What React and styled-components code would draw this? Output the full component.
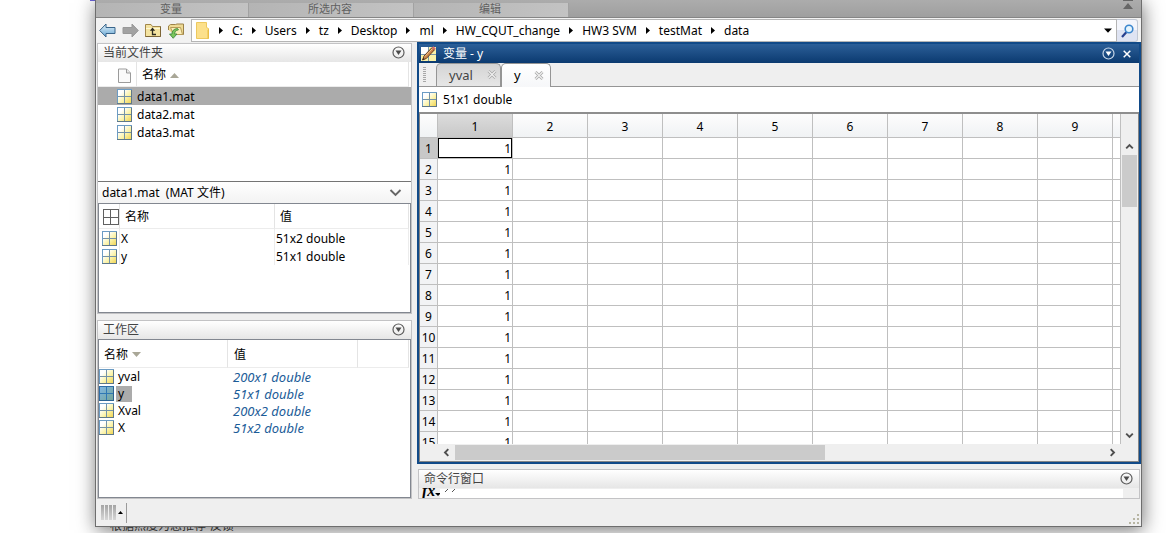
import React from "react";
import styled, { createGlobalStyle, css } from "styled-components";

const Global = createGlobalStyle`
  *, *::before, *::after { box-sizing: border-box; }
  body {
    margin: 0;
    overflow: hidden;
    background: #fff;
    color: #000;
    font: 12px/18px "Noto Sans", "Noto Sans CJK SC", sans-serif;
  }
  button, input { font: inherit; color: inherit; }
  button { display: inline-flex; align-items: center; justify-content: center; padding: 0; border: 0; background: none; }
  a { color: inherit; text-decoration: none; }
  table { border-collapse: separate; border-spacing: 0; table-layout: fixed; width: 100%; }
  th { font-weight: 400; text-align: left; }
  th, td { padding: 0; white-space: nowrap; overflow: hidden; }
  svg { display: block; flex: none; }
`;

const Desktop = styled.div`
  display: flex;
  flex-direction: column;
  height: 100vh;
  padding: 0 24px 0 95px;
  background: linear-gradient(#6a62d8, #6a62d8) 90px 0 / 5px 1px no-repeat #fff;
`;

const Window = styled.main`
  position: relative;
  z-index: 1;
  flex: 1;
  min-height: 0;
  display: flex;
  flex-direction: column;
  border: 1px solid #6e6e6e;
  border-top: 0;
  background: #efefef;
  box-shadow: 1px 3px 18px rgba(0, 0, 0, 0.55);
`;

const PageBehind = styled.div`
  flex: none;
  display: flex;
  align-items: flex-end;
  gap: 4px;
  height: 6px;
  padding-left: 15px;
  overflow: hidden;
  color: #444;
  line-height: 14px;
  white-space: nowrap;
`;

const Toolstrip = styled.div`
  flex: none;
  display: flex;
  height: 18px;
  padding-top: 3px;
  border-bottom: 1px solid #858585;
  background: linear-gradient(#acacac, #9f9f9f);
`;

const ToolGroup = styled.div`
  width: ${(p) => p.$width}px;
  padding-right: 2px;
  border-right: 1px solid #a2a2a2;
  background: linear-gradient(100deg, #b4b4b4, #c3c3c3);
  color: #606060;
  font-size: 11px;
  line-height: 12px;
  text-align: center;
`;

const CollapseButton = styled.button`
  align-self: flex-start;
  margin: -3px 7px 0 auto;
`;

const AddressRow = styled.nav`
  flex: none;
  display: flex;
  height: 24px;
  padding: 1px 3px 0 3px;
  background: #f2f2f2;
`;

const NavButtons = styled.div`
  display: flex;
  align-items: center;
  gap: 6px;
  width: 92px;
`;

const AddressBox = styled.div`
  flex: 1;
  min-width: 0;
  display: flex;
  align-items: center;
  gap: 9px;
  padding: 0 4px;
  border: 1px solid #b5b5b5;
  background: #fff;
  white-space: nowrap;
`;

const DropButton = styled.button`
  margin-left: auto;
`;

const SearchButton = styled.button`
  width: 21px;
  border: 1px solid #c2c8d4;
  border-left: 0;
  border-radius: 0 3px 3px 0;
  background: linear-gradient(#f3f5fb 50%, #dfe4f3 50%);
`;

const Workbench = styled.div`
  flex: 1;
  min-height: 0;
  display: grid;
  grid-template-columns: 315px minmax(0, 1fr);
  grid-template-rows: minmax(0, 1fr);
  column-gap: 5px;
  padding-left: 1px;
`;

const Sidebar = styled.aside`
  display: grid;
  grid-template-rows: minmax(0, 271fr) minmax(0, 179fr);
  row-gap: 6px;
  padding-top: 1px;
`;

const MainColumn = styled.div`
  display: flex;
  flex-direction: column;
  min-height: 0;
  gap: 5px;
`;

const Panel = styled.section`
  display: flex;
  flex-direction: column;
  min-height: 0;
  border: 1px solid #c3c3c5;
  background: #efefef;
`;

const PanelTitle = styled.header`
  flex: none;
  display: flex;
  align-items: center;
  justify-content: space-between;
  height: 18px;
  padding: 0 6px 1px 5px;
  background: linear-gradient(#fff, #e6e6e6);
  color: #444;

  h2 { margin: 0; font-size: 12px; font-weight: 400; line-height: 16px; }
`;

const FileList = styled.div`
  flex: 1;
  min-height: 0;
  overflow: hidden;
  background: #fff;
`;

const ListFrame = styled.div`
  flex: ${(p) => (p.$height ? "none" : "1")};
  height: ${(p) => (p.$height ? p.$height + "px" : "auto")};
  min-height: 0;
  overflow: hidden;
  border: 1px solid #828790;
  background: #fff;
`;

const HeadCell = styled.th`
  height: ${(p) => p.$height || 25}px;
  padding-top: 2px;
  padding-left: ${(p) => p.$indent || 0}px;
  border-right: 1px solid #e4e4e4;
  border-bottom: 1px solid #ececec;
`;

const HeadLabel = styled.span`
  display: flex;
  align-items: center;
  gap: 4px;
`;

const ListRow = styled.tr`
  height: ${(p) => p.$height || 18}px;
  line-height: ${(p) => (p.$height || 18) - 1}px;
  background: ${(p) => (p.$selected ? "#ababab" : "transparent")};
`;

const Cell = styled.td`
  padding-left: ${(p) => p.$indent || 0}px;
  ${(p) => p.$ruled && css`border-right: 1px solid #ececec;`}
  ${(p) => p.$value && css`color: #1c5c98; font-style: italic; font-size: 13px;`}
`;

const NameTag = styled.span`
  display: inline-block;
  margin-left: 2px;
  padding: 0 8px 0 2px;
  background: ${(p) => (p.$selected ? "#ababab" : "transparent")};
`;

const NameLine = styled.span`
  display: flex;
  align-items: center;
`;

const DetailTitle = styled.header`
  flex: none;
  display: flex;
  align-items: center;
  justify-content: space-between;
  height: 22px;
  padding: 0 9px 0 4px;
  border-top: 1px solid #747474;
  background: linear-gradient(#fff, #f3f3f3);
  white-space: pre;

  h3 { margin: 0; font-size: 12px; font-weight: 400; }
`;

const Editor = styled.section`
  flex: 1;
  min-height: 0;
  display: flex;
  flex-direction: column;
  border: 2px solid #114a88;
  background: #efefef;
`;

const EditorTitle = styled.header`
  flex: none;
  display: flex;
  align-items: center;
  gap: 6px;
  height: 19px;
  padding: 0 8px 0 2px;
  background: linear-gradient(#2c5f98, #0b3a70);
  color: #fff;

  h2 { margin: 0; font-size: 12px; font-weight: 400; }
`;

const TitleButtons = styled.div`
  display: flex;
  align-items: center;
  gap: 8px;
  margin-left: auto;
`;

const TabBar = styled.div`
  flex: none;
  display: flex;
  align-items: flex-end;
  height: 24px;
  border-bottom: 1px solid #959595;
`;

const Grip = styled.span`
  align-self: center;
  width: 3px;
  height: 15px;
  margin: 0 10px 0 4px;
  background: repeating-linear-gradient(#a8a8a8 0 1px, transparent 1px 2px);
`;

const Tab = styled.div`
  display: flex;
  align-items: center;
  justify-content: space-between;
  width: ${(p) => p.$width}px;
  height: ${(p) => (p.$active ? 24 : 23)}px;
  margin-bottom: ${(p) => (p.$active ? -1 : 0)}px;
  padding: 0 ${(p) => (p.$active ? 6 : 3)}px 1px 12px;
  border: 1px solid #959595;
  border-bottom: 0;
  border-radius: 5px 5px 0 0;
  background: ${(p) => (p.$active ? "linear-gradient(#fff, #f6f7f9)" : "linear-gradient(#d4d4d4, #e6e6e6)")};
  color: ${(p) => (p.$active ? "#000" : "#444")};
  font-size: 13px;
`;

const InfoBar = styled.div`
  flex: none;
  display: flex;
  align-items: center;
  gap: 6px;
  height: 25px;
  padding-left: 3px;
  background: #fff;
`;

const GridFrame = styled.div`
  flex: 1;
  min-height: 0;
  display: grid;
  grid-template-columns: minmax(0, 1fr) 17px;
  grid-template-rows: minmax(0, 1fr) 17px;
  border: 1px solid #858585;
  border-top: 2px solid #8e8e8e;
`;

const GridView = styled.div`
  overflow: hidden;
  background: #fff;
`;

const ColHead = styled.th`
  height: 24px;
  padding-top: 2px;
  border-right: 1px solid #bfbfbf;
  border-bottom: 1px solid #bfbfbf;
  background: ${(p) => (p.$selected ? "linear-gradient(#dcdcdc, #c8c8c8)" : "linear-gradient(#fdfdfd, #f0f2f4)")};
  text-align: center;
`;

const RowHead = styled(ColHead)`
  height: 21px;
  background: ${(p) => (p.$selected ? "#c8c8c8" : "#f2f3f5")};
`;

const DataCell = styled.td`
  height: 21px;
  padding: 2px 1px 0 0;
  border-right: 1px solid #bfbfbf;
  border-bottom: 1px solid #bfbfbf;
  text-align: right;
  ${(p) => p.$selected && css`box-shadow: inset 0 0 0 1px #000;`}
`;

const VerticalScroll = styled.div`
  display: flex;
  flex-direction: column;
  padding: 24px 1px 0 1px;
`;

const HorizontalScroll = styled.div`
  display: flex;
  padding: 1px 0 1px 18px;
`;

const ScrollButton = styled.button`
  flex: none;
  width: ${(p) => (p.$wide ? 17 : 15)}px;
  height: ${(p) => (p.$wide ? 15 : 17)}px;
`;

const Track = styled.div`
  flex: 1;
  min-height: 0;
`;

const Thumb = styled.div`
  width: ${(p) => p.$width || "100%"};
  height: ${(p) => p.$height || "100%"};
  background: #cbcbcb;
`;

const CommandPanel = styled(Panel)`
  flex: none;
  margin: 0 1px;
`;

const CommandLine = styled.div`
  display: flex;
  align-items: flex-end;
  height: 10px;
  padding-right: 16px;
  overflow: hidden;
`;

const FxMark = styled.span`
  display: flex;
  align-items: flex-end;
  width: 21px;
  padding-left: 3px;
  font: italic bold 16px/14px "Liberation Serif", serif;
`;

const Prompt = styled.span`
  flex: 1;
  height: 9px;
  padding-left: 4px;
  background: #fff;
`;

const StatusBar = styled.footer`
  flex: none;
  display: flex;
  align-items: center;
  height: 27px;
  padding-left: 5px;
`;

const StatusBusy = styled.button`
  gap: 2px;
  height: 20px;
  padding-right: 3px;
  border-right: 1px solid #9a9a9a;
`;

const ResizeGrip = styled.span`
  align-self: flex-end;
  margin: 0 2px 2px auto;
`;

const MatIcon = ({ selected }) => (
  <svg width="15" height="15" viewBox="0 0 15 15" aria-hidden="true" shapeRendering="crispEdges">
    <defs>
      <linearGradient id="matFill" x1="0" y1="0" x2="1" y2="1">
        <stop offset="0.25" stopColor="#fff" />
        <stop offset="0.6" stopColor="#fbf3a8" />
        <stop offset="1" stopColor="#f0d24e" />
      </linearGradient>
      <linearGradient id="matSelected" x1="0" y1="0" x2="1" y2="1">
        <stop offset="0" stopColor="#7fb6e6" />
        <stop offset="1" stopColor="#74a595" />
      </linearGradient>
    </defs>
    <rect x="0.5" y="0.5" width="14" height="14" fill={selected ? "url(#matSelected)" : "url(#matFill)"} stroke={selected ? "#2f6ea8" : "#6c9cc4"} />
    <path d="M7.5 1v13M1 7.5h13" stroke={selected ? "#2f78b4" : "#7492a8"} />
    <path d="M0 14.5h15M14.5 1v13" stroke={selected ? "#2b6392" : "#5f7888"} />
  </svg>
);

const PlainGridIcon = () => (
  <svg width="16" height="16" viewBox="0 0 16 16" aria-hidden="true" shapeRendering="crispEdges">
    <path d="M.5.5h15v15H.5zM7.5 0v16M0 8.5h16" fill="#fff" stroke="#606060" />
  </svg>
);

const PencilGridIcon = () => (
  <svg width="16" height="16" viewBox="0 0 16 16" aria-hidden="true">
    <rect x="0" y="1" width="15" height="14" fill="#fbf3a8" />
    <path d="M0 1h8v7H0z" fill="#fff" />
    <path d="M7.500 1v14M0 8.500h15" stroke="#7c97a8" />
    <path d="M1.500 14l1.500-4L11 1.500l2.600 2.200L5.300 12.500z" fill="#c9844a" stroke="#5a3216" strokeWidth=".9" />
    <path d="M3.800 10.500L11.500 2.500" stroke="#f4c48c" />
    <path d="M10.800 1.700l1.500-1.500 2.500 2.300-1.300 1.400z" fill="#d56a72" />
    <path d="M1.500 14l.7-2 1.300 1.200z" fill="#222" />
  </svg>
);

const MenuCircle = ({ light }) => (
  <svg width="13" height="13" viewBox="0 0 13 13" aria-hidden="true">
    <circle cx="6.500" cy="6.500" r="5.500" fill="none" stroke={light ? "#c6d6e8" : "#5d5d5d"} strokeWidth="1.200" />
    <path d="M3.500 4.500h6L6.500 9z" fill={light ? "#fff" : "#4b4b4b"} />
  </svg>
);

const CrumbArrow = () => (
  <svg width="4" height="7" viewBox="0 0 4 7" aria-hidden="true"><path d="M0 0l4 3.500L0 7z" /></svg>
);

const BlackDown = () => (
  <svg width="8" height="5" viewBox="0 0 8 5" aria-hidden="true"><path d="M0 .5h8L4 4.800z" /></svg>
);

const SortArrow = ({ down }) => (
  <svg width="9" height="5" viewBox="0 0 9 5" aria-hidden="true">
    <path d={down ? "M0 0h9L4.500 5z" : "M0 5h9L4.500 0z"} fill="#a9a797" />
  </svg>
);

const turns = { up: 0, right: 90, down: 180, left: 270 };
const Chevron = ({ to, wide }) => (
  <svg width={wide ? 13 : 9} height="9" viewBox={wide ? "-2 0 13 9" : "0 0 9 9"} aria-hidden="true">
    <path
      d={wide ? "M-.5 7l5-5 5 5" : "M1.200 6.300l3.300-3.300 3.300 3.300"}
      fill="none"
      stroke={wide ? "#666" : "#4f4f4f"}
      strokeWidth="1.900"
      transform={`rotate(${turns[to]} 4.5 4.5)`}
    />
  </svg>
);

const NavArrow = ({ forward }) => (
  <svg width="17" height="15" viewBox="0 0 17 15" aria-hidden="true">
    <defs>
      <linearGradient id="backFill" x1="0" y1="0" x2="0" y2="1">
        <stop offset="0" stopColor="#e4f3fb" />
        <stop offset="1" stopColor="#66a5d2" />
      </linearGradient>
    </defs>
    <path
      d={forward ? "M16.300 7.500L10 1v3.500H1v6h9V14z" : "M.7 7.500L7 1v3.500h9v6H7V14z"}
      fill={forward ? "#a2a2a2" : "url(#backFill)"}
      stroke={forward ? "#989898" : "#39658b"}
    />
  </svg>
);

const FolderUpIcon = () => (
  <svg width="16" height="15" viewBox="0 0 16 15" aria-hidden="true">
    <path d="M.5 13.500V1.500H6l1.500 2h8v10z" fill="#f4e3a0" stroke="#a2874a" />
    <path d="M1 5.500h14" stroke="#fff8d4" />
    <path d="M.5 13.500h15v-10" fill="none" stroke="#7c6537" />
    <path d="M7.500 6v5.500H11" fill="none" stroke="#2c2a20" strokeWidth="1.300" />
    <path d="M7.500 4.500l2.700 3.300H4.800z" fill="#2c2a20" />
  </svg>
);

const FolderBrowseIcon = () => (
  <svg width="17" height="16" viewBox="0 0 17 16" aria-hidden="true">
    <path d="M1.500 7V3l2-1.500h5L10 1h6.500v10.500H7" fill="#eeda94" stroke="#9c8248" />
    <path d="M3.500 4.500h10l2 7h-9z" fill="#fbf0bb" stroke="#b89c59" />
    <path d="M10.500 5.500c-4 .5-5.500 2.500-5.500 5.500H2.500l3.700 4.300L10 11H7.700c0-2 .8-3.500 3.800-4.200z" fill="#7bc65c" stroke="#36803a" strokeWidth=".8" />
  </svg>
);

const FolderIcon = () => (
  <svg width="14" height="17" viewBox="0 0 14 17" aria-hidden="true">
    <path d="M.5.5h10v5l2 1v10H.5z" fill="#fce08b" stroke="#edc95f" />
    <path d="M11.500 8v8.500h1.500V7z" fill="#e9bd45" />
  </svg>
);

const PageIcon = () => (
  <svg width="13" height="15" viewBox="0 0 13 15" aria-hidden="true">
    <path d="M.5 1h8l4 4v9.500H.5z" fill="#fafafa" stroke="#9b9b9b" />
    <path d="M8.500 1v4h4" fill="#e8e8e8" stroke="#9b9b9b" />
  </svg>
);

const MagnifierIcon = () => (
  <svg width="13" height="14" viewBox="0 0 13 14" aria-hidden="true">
    <path d="M1 13l4.500-5" stroke="#27408f" strokeWidth="2.200" />
    <circle cx="8" cy="5" r="3.800" fill="#e6f5fd" stroke="#3b86cd" strokeWidth="1.600" />
  </svg>
);

const TabCross = () => (
  <svg width="10" height="9" viewBox="0 0 10 9" aria-hidden="true">
    <path d="M1.500 1l7 7M8.500 1l-7 7" stroke="#a8a8a8" strokeWidth="2.800" />
    <path d="M1.500 1l7 7M8.500 1l-7 7" stroke="#f2f2f2" strokeWidth="1.100" />
  </svg>
);

const CloseCross = () => (
  <svg width="8" height="8" viewBox="0 0 8 8" aria-hidden="true">
    <path d="M.7 .7l6.600 6.600M7.300 .7L.7 7.300" stroke="#fff" strokeWidth="1.500" />
  </svg>
);

const path = ["C:", "Users", "tz", "Desktop", "ml", "HW_CQUT_change", "HW3 SVM", "testMat", "data"];
const files = ["data1.mat", "data2.mat", "data3.mat"];
const fileVars = [["X", "51x2 double"], ["y", "51x1 double"]];
const workspace = [["yval", "200x1 double"], ["y", "51x1 double"], ["Xval", "200x2 double"], ["X", "51x2 double"]];
const columns = [1, 2, 3, 4, 5, 6, 7, 8, 9];
const rows = Array.from({ length: 15 }, (_, i) => i + 1);

function CurrentFolder() {
  return (
    <Panel>
      <PanelTitle>
        <h2>当前文件夹</h2>
        <button aria-label="当前文件夹菜单"><MenuCircle /></button>
      </PanelTitle>
      <FileList>
        <table>
          <colgroup><col width="39" /><col /><col width="2" /></colgroup>
          <thead>
            <tr>
              <HeadCell $indent={20}><PageIcon /></HeadCell>
              <HeadCell $indent={5}><HeadLabel>名称<SortArrow /></HeadLabel></HeadCell>
              <th />
            </tr>
          </thead>
          <tbody>
            {files.map((name, i) => (
              <ListRow key={name} $selected={i === 0}>
                <Cell $indent={19}><MatIcon /></Cell>
                <Cell colSpan={2}>{name}</Cell>
              </ListRow>
            ))}
          </tbody>
        </table>
      </FileList>
      <DetailTitle>
        <h3>{"data1.mat  (MAT 文件)"}</h3>
        <button aria-label="折叠详细信息"><Chevron to="down" wide /></button>
      </DetailTitle>
      <ListFrame $height={110}>
        <table>
          <colgroup><col width="21" /><col width="155" /><col /><col width="1" /></colgroup>
          <thead>
            <tr>
              <HeadCell $indent={4}><PlainGridIcon /></HeadCell>
              <HeadCell $indent={5}>名称</HeadCell>
              <HeadCell $indent={5}>值</HeadCell>
              <th />
            </tr>
          </thead>
          <tbody>
            {fileVars.map(([name, value]) => (
              <ListRow key={name}>
                <Cell $indent={3} $ruled><MatIcon /></Cell>
                <Cell $indent={1} $ruled>{name}</Cell>
                <Cell $indent={1} $ruled>{value}</Cell>
                <td />
              </ListRow>
            ))}
          </tbody>
        </table>
      </ListFrame>
    </Panel>
  );
}

function Workspace() {
  return (
    <Panel>
      <PanelTitle>
        <h2>工作区</h2>
        <button aria-label="工作区菜单"><MenuCircle /></button>
      </PanelTitle>
      <ListFrame>
        <table>
          <colgroup><col width="129" /><col width="130" /><col /><col width="1" /></colgroup>
          <thead>
            <tr>
              <HeadCell $height={28} $indent={5}><HeadLabel>名称<SortArrow down /></HeadLabel></HeadCell>
              <HeadCell $height={28} $indent={6}>值</HeadCell>
              <HeadCell $height={28} />
              <th />
            </tr>
          </thead>
          <tbody>
            {workspace.map(([name, value], i) => (
              <ListRow key={name} $height={17}>
                <Cell><NameLine><MatIcon selected={i === 1} /><NameTag $selected={i === 1}>{name}</NameTag></NameLine></Cell>
                <Cell $indent={5} $value>{value}</Cell>
                <td colSpan={2} />
              </ListRow>
            ))}
          </tbody>
        </table>
      </ListFrame>
    </Panel>
  );
}

function VariableEditor() {
  return (
    <Editor>
      <EditorTitle>
        <PencilGridIcon />
        <h2>变量 - y</h2>
        <TitleButtons>
          <button aria-label="变量菜单"><MenuCircle light /></button>
          <button aria-label="关闭"><CloseCross /></button>
        </TitleButtons>
      </EditorTitle>
      <TabBar>
        <Grip />
        <Tab $width={65}><button>yval</button><button aria-label="关闭 yval"><TabCross /></button></Tab>
        <Tab $width={50} $active><button>y</button><button aria-label="关闭 y"><TabCross /></button></Tab>
      </TabBar>
      <InfoBar><MatIcon />51x1 double</InfoBar>
      <GridFrame>
        <GridView>
          <table>
            <colgroup>
              <col width="18" />
              {columns.map((c) => <col key={c} width="75" />)}
              <col />
            </colgroup>
            <thead>
              <tr>
                <ColHead as="td" />
                {columns.map((c) => <ColHead key={c} $selected={c === 1}>{c}</ColHead>)}
                <ColHead as="td" />
              </tr>
            </thead>
            <tbody>
              {rows.map((r) => (
                <tr key={r}>
                  <RowHead $selected={r === 1}>{r}</RowHead>
                  {columns.map((c) => (
                    <DataCell key={c} $selected={r === 1 && c === 1}>{c === 1 ? 1 : null}</DataCell>
                  ))}
                  <DataCell />
                </tr>
              ))}
            </tbody>
          </table>
        </GridView>
        <VerticalScroll>
          <ScrollButton aria-label="向上滚动"><Chevron to="up" /></ScrollButton>
          <Track><Thumb $height="19%" /></Track>
          <ScrollButton aria-label="向下滚动"><Chevron to="down" /></ScrollButton>
        </VerticalScroll>
        <HorizontalScroll>
          <ScrollButton $wide aria-label="向左滚动"><Chevron to="left" /></ScrollButton>
          <Track><Thumb $width="57%" /></Track>
          <ScrollButton $wide aria-label="向右滚动"><Chevron to="right" /></ScrollButton>
        </HorizontalScroll>
      </GridFrame>
    </Editor>
  );
}

export default function App() {
  return (
    <Desktop>
      <Global />
      <Window>
        <Toolstrip>
          <ToolGroup $width={153}>变量</ToolGroup>
          <ToolGroup $width={165}>所选内容</ToolGroup>
          <ToolGroup $width={155}>编辑</ToolGroup>
          <CollapseButton aria-label="最小化工具条">
            <svg width="12" height="10" viewBox="0 0 12 10" aria-hidden="true"><path d="M1 0h10v1H1zM6 3l5 6H1z" fill="#666" /></svg>
          </CollapseButton>
        </Toolstrip>
        <AddressRow>
          <NavButtons>
            <button aria-label="后退"><NavArrow /></button>
            <button aria-label="前进"><NavArrow forward /></button>
            <button aria-label="向上一级"><FolderUpIcon /></button>
            <button aria-label="浏览文件夹"><FolderBrowseIcon /></button>
          </NavButtons>
          <AddressBox>
            <FolderIcon />
            {path.map((part) => (
              <React.Fragment key={part}>
                <CrumbArrow />
                <a href="#folder">{part}</a>
              </React.Fragment>
            ))}
            <DropButton aria-label="文件夹历史"><BlackDown /></DropButton>
          </AddressBox>
          <SearchButton aria-label="搜索"><MagnifierIcon /></SearchButton>
        </AddressRow>
        <Workbench>
          <Sidebar>
            <CurrentFolder />
            <Workspace />
          </Sidebar>
          <MainColumn>
            <VariableEditor />
            <CommandPanel>
              <PanelTitle>
                <h2>命令行窗口</h2>
                <button aria-label="命令行窗口菜单"><MenuCircle /></button>
              </PanelTitle>
              <CommandLine>
                <FxMark>fx<svg width="6" height="5" viewBox="0 0 6 5" aria-hidden="true"><path d="M0 0h6L3 3z" /></svg></FxMark>
                <Prompt>
                  <svg width="12" height="4" viewBox="0 0 12 4" aria-hidden="true"><path d="M1 3l3-3M8 3l3-3" stroke="#555" /></svg>
                </Prompt>
              </CommandLine>
            </CommandPanel>
          </MainColumn>
        </Workbench>
        <StatusBar>
          <StatusBusy aria-label="状态">
            <svg width="15" height="15" viewBox="0 0 15 15" aria-hidden="true">
              <defs>
                <linearGradient id="busyFill" x1="0" y1="0" x2="0" y2="1">
                  <stop offset="0" stopColor="#a4a4a4" />
                  <stop offset="1" stopColor="#d6d6d6" />
                </linearGradient>
              </defs>
              <path d="M0 0h3v15H0zM4 0h3v15H4zM8 0h3v15H8zM12 0h3v15h-3z" fill="url(#busyFill)" />
            </svg>
            <svg width="5" height="3" viewBox="0 0 5 3" aria-hidden="true"><path d="M0 3h5L2.500 0z" /></svg>
          </StatusBusy>
          <ResizeGrip>
            <svg width="10" height="10" viewBox="0 0 10 10" aria-hidden="true">
              <path d="M8 0h2v2H8zM4 4h2v2H4zM8 4h2v2H8zM0 8h2v2H0zM4 8h2v2H4zM8 8h2v2H8z" fill="#b7b5a3" />
            </svg>
          </ResizeGrip>
        </StatusBar>
      </Window>
      <PageBehind><span>根据热度为您推荐</span><span>反馈</span></PageBehind>
    </Desktop>
  );
}
